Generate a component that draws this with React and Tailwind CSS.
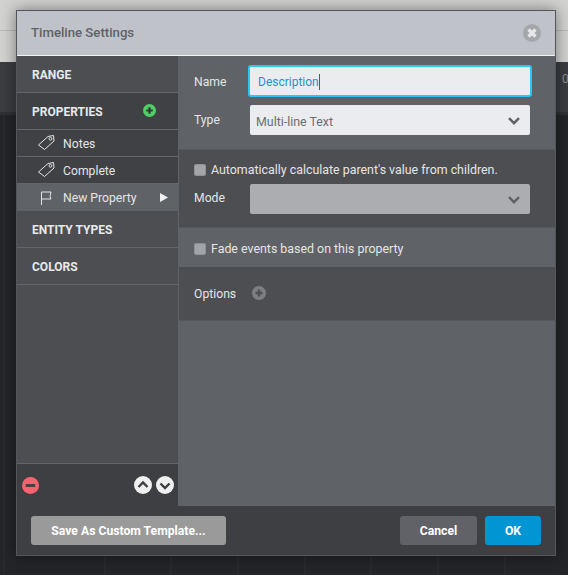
const tagPath = "M1.5 11 L11 2.5 L16.5 1.5 L17 7 L7.5 15.5 Z";

function Tag() {
  return (
    <svg width="20" height="18" viewBox="0 0 20 18" fill="none" stroke="#e4e5e6" strokeWidth="1" className="shrink-0">
      <path d={tagPath} />
      <circle cx="13.5" cy="4.8" r="1.4" />
    </svg>
  );
}

function Flag() {
  return (
    <svg width="20" height="18" viewBox="0 0 20 18" fill="none" stroke="#e4e5e6" strokeWidth="1" className="shrink-0">
      <path d="M4.5 16V3H14L13 7.5L14 10H4.5" />
    </svg>
  );
}

function Circle({ bg, fg, size = 17, kind }) {
  return (
    <svg width={size} height={size} viewBox="0 0 18 18" className="shrink-0">
      <circle cx="9" cy="9" r="9" fill={bg} />
      {kind === "plus" && <path d="M9 4.5v9M4.5 9h9" stroke={fg} strokeWidth="3" />}
      {kind === "minus" && <path d="M4 9h10" stroke={fg} strokeWidth="3" />}
      {kind === "x" && <path d="M5.5 5.5l7 7M12.5 5.5l-7 7" stroke={fg} strokeWidth="3.4" />}
      {kind === "up" && <path d="M4.5 11L9 6.5l4.5 4.5" stroke={fg} strokeWidth="2.4" fill="none" />}
      {kind === "down" && <path d="M4.5 7.5L9 12l4.5-4.5" stroke={fg} strokeWidth="2.4" fill="none" />}
    </svg>
  );
}

function Chevron() {
  return (
    <svg width="12" height="8" viewBox="0 0 12 8" fill="none" stroke="#5f6165" strokeWidth="2.4" className="shrink-0">
      <path d="M1 1.2L6 6.2l5-5" />
    </svg>
  );
}

function Section({ children }) {
  return (
    <div className="h-[37px] flex items-center pl-[15px] pt-[1px] border-b border-[#626569] bg-[#4c4e52] text-[12px] font-bold text-[#e8e9ea]">
      {children}
    </div>
  );
}

function Item({ icon, label, active }) {
  return (
    <div className={`h-[27px] flex items-center pl-[20px] text-[12.2px] ${active ? "bg-[#5f6266]" : "bg-[#3f4145] border-b border-[#626569]"} text-[#e4e5e6]`}>
      {icon}
      <span className={`ml-[6px] ${active ? "pt-[1px]" : "pt-[3px]"}`}>{label}</span>
      {active && (
        <svg width="8" height="9" viewBox="0 0 8 9" className="ml-[24px]">
          <path d="M0 0l8 4.5L0 9z" fill="#f0f0f0" />
        </svg>
      )}
    </div>
  );
}

function Check({ label }) {
  return (
    <div className="flex items-center gap-[5px] text-[12.4px] text-[#e4e5e6]">
      <span className="w-[12px] h-[12px] rounded-[2px] bg-[#a3a4a7] border border-[#8f9093]" />
      <span>{label}</span>
    </div>
  );
}

export default function App() {
  return (
    <div className="relative w-[568px] h-[575px] overflow-hidden bg-[#232528] font-['Roboto',sans-serif]">
      <div className="h-[62px] bg-[#d2d2d0]">
        <div className="h-[31px] border-b border-[#b9b9b8]" />
      </div>
      <div className="h-[53px] bg-[#3b3d41] border-b-[3px] border-[#2f3134] flex justify-end items-center">
        <span className="text-[12px] text-[#8c8e91] w-[6px] overflow-hidden mt-[-16px]">0</span>
      </div>
      <div className="h-[460px] bg-[repeating-linear-gradient(90deg,transparent_0,transparent_65.7px,#2d2f32_65.7px,#2d2f32_66.7px)] bg-[position:38.5px_0]" />
      <div className="absolute left-[16px] top-[10px] w-[540px] h-[546px] border border-[#53565a] flex flex-col shadow-[0_0_14px_rgba(0,0,0,0.45)] bg-[#3d3f43]">
        <div className="h-[45px] shrink-0 bg-[#bfc2c9] border-b border-[#f2f3f4] flex items-center justify-between pl-[14px] pr-[14px]">
          <span className="text-[13.2px] font-medium text-[#5f6268]">Timeline Settings</span>
          <Circle bg="#a4a6aa" fg="#e6e7e9" size={18} kind="x" />
        </div>
        <div className="h-[450px] shrink-0 flex">
          <div className="w-[162px] shrink-0 flex flex-col bg-[#4c4e52] border-r border-[#5f6266]">
            <Section>RANGE</Section>
            <div className="h-[37px] flex items-center pl-[15px] pt-[1px] border-b border-[#626569] bg-[#3f4145] text-[12px] font-bold text-[#e8e9ea]">
              <span>PROPERTIES</span>
              <span className="ml-[40px] mt-[-3px]"><Circle bg="#4fd065" fg="#33363a" size={13} kind="plus" /></span>
            </div>
            <Item icon={<Tag />} label="Notes" />
            <Item icon={<Tag />} label="Complete" />
            <Item icon={<Flag />} label="New Property" active />
            <Section>ENTITY TYPES</Section>
            <Section>COLORS</Section>
            <div className="flex-1" />
            <div className="h-[43px] bg-[#3d3f43] border-t border-[#626569] flex items-center pl-[5px] pr-[4px]">
              <Circle bg="#f9626f" fg="#3d3f43" size={17} kind="minus" />
              <span className="flex-1" />
              <div className="flex gap-[4px]">
                <Circle bg="#f0f0f0" fg="#3d3f43" size={18} kind="up" />
                <Circle bg="#f0f0f0" fg="#3d3f43" size={18} kind="down" />
              </div>
            </div>
          </div>
          <div className="flex-1 flex flex-col bg-[#5f6266] text-[12.2px] text-[#e4e5e6]">
            <div className="h-[94px] shrink-0 border-b border-[#55585c] px-[15px] pt-[9px]">
              <div className="flex items-center h-[32px]">
                <span className="w-[54px] pt-[3px]">Name</span>
                <div className="w-[284px] h-[32px] rounded-[3px] bg-[#ebecf0] border-2 border-[#2cc6f5] flex items-center pl-[8px] pt-[1px] text-[12px] text-[#1d93c9]">
                  Description<span className="w-px h-[16px] bg-[#1a6f9e]" />
                </div>
              </div>
              <div className="flex items-center h-[30px] mt-[8px]">
                <span className="w-[56px]">Type</span>
                <div className="w-[280px] h-[30px] rounded-[2px] bg-[#ebecf0] flex items-center justify-between pl-[6px] pr-[10px] text-[12.4px] text-[#6c6e72]">
                  <span className="pt-[4px]">Multi-line Text</span>
                  <span className="pt-[2px]"><Chevron /></span>
                </div>
              </div>
            </div>
            <div className="h-[78px] shrink-0 bg-[#4c4e52] border-b border-[#55585c] px-[15px] pt-[11px]">
              <Check label="Automatically calculate parent's value from children." />
              <div className="flex items-center h-[30px] mt-[4px]">
                <span className="w-[56px]">Mode</span>
                <div className="w-[280px] h-[30px] rounded-[2px] bg-[#acadb0] flex items-center justify-end pr-[10px] pt-[2px]">
                  <Chevron />
                </div>
              </div>
            </div>
            <div className="h-[40px] shrink-0 border-b border-[#4c4e52] px-[15px] pt-[3px] flex items-center">
              <Check label="Fade events based on this property" />
            </div>
            <div className="h-[53px] shrink-0 bg-[#4c4e52] border-b border-[#55585c] px-[15px] flex items-center">
              <span className="w-[58px]">Options</span>
              <span className="mt-[-2px]"><Circle bg="#7d7f83" fg="#4c4e52" size={14} kind="plus" /></span>
            </div>
          </div>
        </div>
        <div className="flex-1 flex items-center justify-between pl-[14px] pr-[14px] text-[12.2px] font-bold text-white">
          <div className="w-[195px] h-[29px] rounded-[3px] bg-[#9a9a9a] flex items-center justify-center pt-[1px]">Save As Custom Template...</div>
          <div className="flex gap-[8px]">
            <div className="w-[77px] h-[29px] rounded-[3px] bg-[#606267] flex items-center justify-center pt-[1px]">Cancel</div>
            <div className="w-[56px] h-[29px] rounded-[3px] bg-[#0195d3] flex items-center justify-center pt-[1px]">OK</div>
          </div>
        </div>
      </div>
    </div>
  );
}
